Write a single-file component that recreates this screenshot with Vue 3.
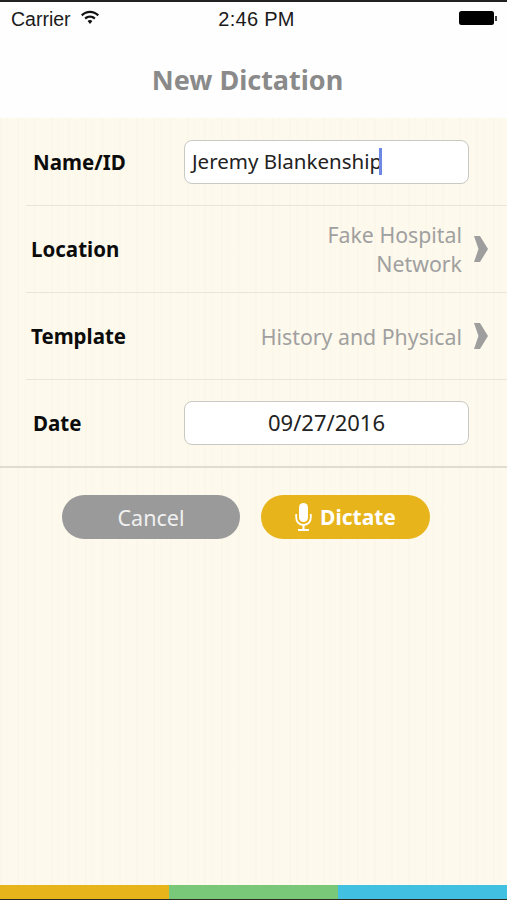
<script setup>
const stripes = ['#e8b41c', '#79c778', '#41c0e2']
</script>

<template>
  <div class="screen">
    <header class="top">
      <div class="status-bar">
        <div class="status-left">
          <span>Carrier</span>
          <svg class="wifi" width="18" height="14" viewBox="0 0 18 14">
            <path d="M0 4.600C5-.6 13-.6 18 4.600l-1.500 1.600C12.200 2 5.800 2 1.500 6.200z" fill="#111" />
            <path d="M3.400 7.800c3.200-3 8-3 11.200 0l-1.500 1.600c-2.400-2.100-5.800-2.100-8.200 0z" fill="#111" />
            <path d="M6.600 10.900c1.400-1.200 3.400-1.200 4.800 0L9 14z" fill="#111" />
          </svg>
        </div>
        <span class="clock">2:46 PM</span>
        <div class="battery">
          <span class="battery-body"></span>
          <span class="battery-tip"></span>
        </div>
      </div>
      <h1>New Dictation</h1>
    </header>

    <main class="content">
      <div class="form">
        <div class="row input-row first">
          <label class="name-label">Name/ID</label>
          <div class="field"><span>Jeremy Blankenship</span><i class="caret"></i></div>
        </div>
        <div class="row link-row">
          <label>Location</label>
          <div class="value">
            <span>Fake Hospital<br />Network</span>
            <svg class="chevron" width="14" height="26" viewBox="0 0 14 26">
              <path d="M0 0h6l8 13-8 13H0l4.500-13z" fill="#9e9e9e" />
            </svg>
          </div>
        </div>
        <div class="row link-row">
          <label>Template</label>
          <div class="value">
            <span>History and Physical</span>
            <svg class="chevron" width="14" height="26" viewBox="0 0 14 26">
              <path d="M0 0h6l8 13-8 13H0l4.500-13z" fill="#9e9e9e" />
            </svg>
          </div>
        </div>
        <div class="row input-row last">
          <label class="name-label">Date</label>
          <div class="field center date"><span>09/27/2016</span></div>
        </div>
      </div>

      <div class="buttons">
        <button class="btn cancel">Cancel</button>
        <button class="btn dictate">
          <svg width="17" height="28" viewBox="0 0 17 28">
            <rect x="4" y="0" width="9" height="19" rx="4.500" fill="#fff" />
            <path d="M1.200 11v3.500c0 4.400 3 7.500 7.300 7.500s7.300-3.100 7.300-7.500V11" fill="none" stroke="#fff" stroke-width="1.800" />
            <path d="M8.500 22v5M3 27h11" fill="none" stroke="#fff" stroke-width="2" />
          </svg>
          <span>Dictate</span>
        </button>
      </div>
    </main>

    <footer class="color-bar">
      <span v-for="color in stripes" :key="color" :style="{ background: color }"></span>
    </footer>
  </div>
</template>

<style scoped>
.screen {
  width: 507px;
  height: 900px;
  display: flex;
  flex-direction: column;
  overflow: hidden;
  font-family: "Noto Sans", "Open Sans", sans-serif;
  background-color: #fdf9ec;
  background-image: repeating-linear-gradient(90deg, rgba(225, 215, 190, 0.07) 0 2px, transparent 2px 7px, rgba(225, 215, 190, 0.05) 7px 8px, transparent 8px 17px);
}

.top {
  height: 118px;
  flex-shrink: 0;
  box-sizing: border-box;
  border-top: 2px solid #222;
  background: #fefefe;
}

.status-bar {
  height: 34px;
  padding: 0 10px 0 11px;
  display: grid;
  grid-template-columns: 1fr auto 1fr;
  align-items: center;
  font-family: "Liberation Sans", Arial, sans-serif;
  font-size: 19.500px;
  color: #1a1a1a;
}

.status-left {
  display: flex;
  align-items: center;
  gap: 10px;
}

.wifi {
  margin-top: -4px;
}

.clock {
  margin-left: 5px;
  font-size: 20px;
  letter-spacing: 0.3px;
}

.battery {
  justify-self: end;
  display: flex;
  align-items: center;
  margin-top: -2px;
}

.battery-body {
  width: 35px;
  height: 14px;
  border-radius: 2.500px;
  background: #000;
}

.battery-tip {
  width: 2px;
  height: 5px;
  margin-left: 1px;
  background: #444;
}

h1 {
  margin: 26px 12px 0 0;
  text-align: center;
  font-size: 27px;
  line-height: 36px;
  font-weight: 700;
  color: #8a8a8a;
}

.content {
  flex: 1;
}

.form {
  border-bottom: 2px solid #dfdcd0;
}

.row {
  height: 87px;
  box-sizing: border-box;
  margin-left: 26px;
  padding: 0 18px 0 5px;
  display: flex;
  align-items: center;
  justify-content: space-between;
  border-bottom: 1px solid #e9e6d9;
}

.row.first {
  height: 88px;
}

.row.last {
  border-bottom: none;
  height: 86px;
}

.input-row {
  padding: 0 38px 0 7px;
}

label {
  font-size: 20.500px;
  font-weight: 700;
  color: #0c0c0c;
}

.field {
  width: 285px;
  height: 44px;
  box-sizing: border-box;
  padding: 0 7px;
  display: flex;
  align-items: center;
  border: 1px solid #c9c9c3;
  border-radius: 8px;
  background: #fff;
  font-size: 20.500px;
  color: #222;
}

.field span {
  margin-top: -2px;
}

.field.center {
  justify-content: center;
}

.field.date {
  font-size: 22px;
}

.caret {
  width: 3px;
  height: 27px;
  margin-left: -3px;
  background: #6d88e4;
}

.value {
  display: flex;
  align-items: center;
  gap: 12px;
  text-align: right;
  font-size: 21.300px;
  line-height: 29px;
  color: #a0a0a0;
}

.chevron {
  margin-right: 1px;
}

.buttons {
  margin-top: 27px;
  padding-left: 62px;
  display: flex;
  gap: 21px;
}

.btn {
  height: 44px;
  padding: 0;
  border: none;
  border-radius: 22px;
  display: flex;
  align-items: center;
  justify-content: center;
  font-family: inherit;
  font-size: 21.500px;
  color: #fff;
}

.cancel {
  width: 178px;
  background: #9a9a9a;
  color: #f0f0f0;
}

.dictate {
  width: 169px;
  gap: 8px;
  background: #e8b41c;
  font-size: 21px;
  font-weight: 700;
}

.color-bar {
  height: 15px;
  flex-shrink: 0;
  box-sizing: border-box;
  display: grid;
  grid-template-columns: 169px 169px 169px;
  border-bottom: 1px solid #2a2a20;
}
</style>

<style>
body {
  margin: 0;
}
</style>
